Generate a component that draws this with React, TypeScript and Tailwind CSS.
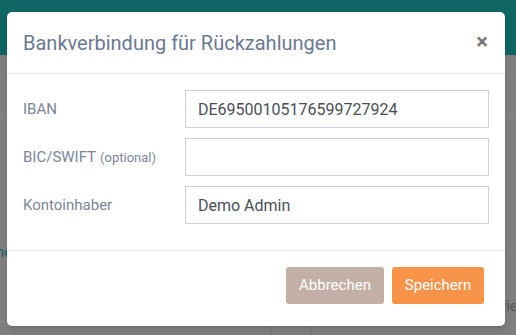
import React from 'react';

type Field = {
  label: string;
  hint?: string;
  value: string;
};

const fields: Field[] = [
  { label: 'IBAN', value: 'DE69500105176599727924' },
  { label: 'BIC/SWIFT', hint: '(optional)', value: '' },
  { label: 'Kontoinhaber', value: 'Demo Admin' },
];

function Backdrop(): React.ReactElement {
  return (
    <div className="absolute inset-0 flex flex-col">
      <div className="h-[55px] bg-[#0f6464]" />
      <div className="relative flex-1 bg-[#7f7f7f]">
        <div className="absolute left-0 right-0 top-[57px] h-px bg-[#858585]" />
        <div className="absolute left-[-4px] top-[186px] text-[15px] text-[#0d5f5f]">ne</div>
        <div className="absolute left-0 w-[8px] top-[266px] h-px bg-[#8a8a8a]" />
        <div className="absolute right-[-2px] top-[240px] text-[15px] text-[#555]">vie</div>
        <div className="absolute left-[270px] top-[270px] h-[20px] w-px bg-[#6f6f6f]" />
        <div className="absolute left-[310px] top-[270px] h-[20px] w-px bg-[#6f6f6f]" />
      </div>
    </div>
  );
}

export default function App(): React.ReactElement {
  return (
    <div
      className="relative w-[516px] h-[335px] overflow-hidden"
      style={{ fontFamily: 'Roboto, "Liberation Sans", sans-serif' }}
    >
      <Backdrop />
      <div className="absolute left-[7px] top-[12px] w-[498px] h-[314px] bg-white rounded-[5px] shadow-md flex flex-col">
        <div className="h-[62px] flex items-center justify-between pl-[16px] pr-[17px] border-b border-[#e5e5e5]">
          <h2 className="text-[20px] text-[#6b7a93] font-normal pt-[1px]">Bankverbindung für Rückzahlungen</h2>
          <button type="button" className="text-[#777] text-[22px] font-bold leading-none pb-[1px]">
            ×
          </button>
        </div>
        <div className="flex flex-col gap-[10px] pt-[16px] pb-[26px] pl-[16px] pr-[16px]">
          {fields.map((f) => (
            <div key={f.label} className="flex items-center">
              <label className="w-[162px] text-[15px] text-[#7c8699]">
                {f.label}
                {f.hint && <span className="text-[13px] ml-[4px]">{f.hint}</span>}
              </label>
              <input
                readOnly
                value={f.value}
                className="w-[304px] h-[38px] border border-[#ccd2dc] px-[12px] text-[16px] text-[#4a4f57] outline-none"
              />
            </div>
          ))}
        </div>
        <div className="flex-1 border-t border-[#e5e5e5] flex justify-end items-start gap-[8px] pt-[16px] pr-[21px]">
          <button
            type="button"
            className="h-[37px] w-[98px] rounded-[3px] bg-[#c2afa5] text-white text-[15px]"
          >
            Abbrechen
          </button>
          <button
            type="button"
            className="h-[37px] w-[92px] rounded-[3px] bg-[#f7944a] text-white text-[15px]"
          >
            Speichern
          </button>
        </div>
      </div>
    </div>
  );
}
